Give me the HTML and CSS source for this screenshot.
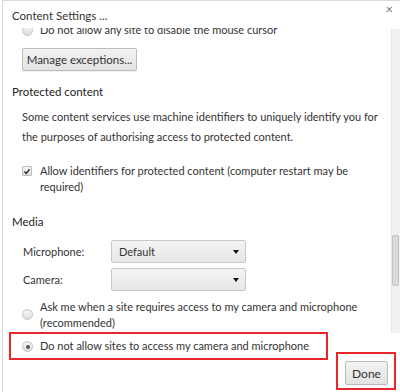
FILE: index.html
```html
<!DOCTYPE html>
<html>
<head>
<meta charset="utf-8">
<link rel="stylesheet" href="styles.css">
</head>
<body>
<div class="dialog">
  <div class="header">
    <span class="title">Content Settings ...</span>
    <span class="close">&#215;</span>
  </div>
  <div class="main">
    <div class="scroll">
      <div class="content">
        <div class="opt first">
          <span class="radio"></span>
          <span class="label">Do not allow any site to disable the mouse cursor</span>
        </div>
        <button class="btn manage">Manage exceptions...</button>
        <h3 class="section">Protected content</h3>
        <p class="para">Some content services use machine identifiers to uniquely identify you for the purposes of authorising access to protected content.</p>
        <div class="opt check-row">
          <span class="checkbox"><svg width="9" height="9" viewBox="0 0 9 9"><path d="M1.6 4.6 L3.6 6.6 L7.4 2" fill="none" stroke="#333" stroke-width="1.6"/></svg></span>
          <span class="label">Allow identifiers for protected content (computer restart may be required)</span>
        </div>
        <h3 class="section media">Media</h3>
        <div class="field mic">
          <span class="flabel">Microphone:</span>
          <span class="select">Default<i class="arrow"></i></span>
        </div>
        <div class="field cam">
          <span class="flabel">Camera:</span>
          <span class="select"><i class="arrow"></i></span>
        </div>
        <div class="opt ask">
          <span class="radio"></span>
          <span class="label">Ask me when a site requires access to my camera and microphone (recommended)</span>
        </div>
        <div class="highlight">
          <div class="opt">
            <span class="radio checked"></span>
            <span class="label">Do not allow sites to access my camera and microphone</span>
          </div>
        </div>
      </div>
    </div>
    <div class="scrollbar"><div class="thumb"></div></div>
  </div>
  <div class="footer">
    <div class="done-box"><button class="btn done">Done</button></div>
  </div>
</div>
</body>
</html>
```
FILE: styles.css
```css
* { box-sizing: border-box; }
html, body { margin: 0; padding: 0; background: #fff; }
body {
  width: 400px; height: 392px; overflow: hidden;
  font-family: "Lato", "Open Sans", sans-serif;
  font-size: 11px;
  color: #333;
}
.dialog {
  margin-left: 2px;
  border-top: 1px solid #d9d9d9;
  border-left: 1px solid #d9d9d9;
  height: 392px;
}
.header {
  height: 27px;
  display: flex;
  align-items: flex-start;
  justify-content: space-between;
  padding: 0 7px 0 9px;
}
.title { font-size: 11.5px; color: #333; line-height: 16px; margin-top: 7px; }
.close { color: #777; font-size: 13px; line-height: 14px; margin-top: 1px; }
.main { display: flex; height: 332px; }
.scroll { flex: 1; overflow: hidden; }
.content { margin-top: -6px; padding-left: 19px; }
.scrollbar {
  flex: none;
  width: 9px; margin-top: 1px; height: 304px;
  background: #f1f1f1;
  border-left: 1px solid #e6e6e6;
  padding-top: 206px;
}
.thumb {
  width: 7px; height: 51px;
  background: #d9d9d9; border: 1px solid #c2c2c2; border-radius: 2px;
}
.opt { display: flex; align-items: flex-start; line-height: 16px; }
.opt .label { margin-left: 7px; }
.radio {
  flex: none;
  width: 11px; height: 11px; border-radius: 50%;
  border: 1px solid #c4c4c4;
  background: linear-gradient(#f6f6f6, #dedede);
  margin-top: 3px;
  position: relative;
}
.radio.checked::after {
  content: ""; position: absolute; left: 2.5px; top: 2.5px;
  width: 4px; height: 4px; border-radius: 50%; background: #555;
}
.checkbox {
  flex: none;
  width: 10px; height: 10px; border: 1px solid #bdbdbd; border-radius: 1px;
  background: linear-gradient(#f6f6f6, #dedede);
  margin: 3px 1px 0 0;
  display: flex; align-items: center; justify-content: center;
}
.checkbox svg { display: block; }
.btn {
  font-family: inherit; font-size: 11.5px; color: #333;
  background: linear-gradient(#f3f3f3, #e2e2e2);
  border: 1px solid #bcbcbc; border-radius: 2px;
  box-shadow: 0 1px 0 rgba(0,0,0,0.06);
  padding: 0 8px;
  display: block;
  white-space: nowrap;
}
.manage { height: 23px; margin-top: 10px; width: 115px; padding: 0; }
.section { font-size: 11.5px; font-weight: normal; margin: 12px 0 0 -10px; line-height: 18px; color: #222; }
.para { margin: 6px 0 0 0; line-height: 20px; }
.check-row { margin-top: 16px; }
.check-row .label { width: 340px; }
.media { margin-top: 18px; }
.field { display: flex; align-items: center; height: 23px; }
.mic { margin-top: 9px; }
.cam { margin-top: 5px; }
.flabel { width: 89px; padding-left: 1px; }
.select {
  width: 135px; height: 23px;
  border: 1px solid #c8c8c8; border-radius: 2px;
  background: linear-gradient(#f4f4f4, #e7e7e7);
  display: flex; align-items: center; padding-left: 7px;
  position: relative;
}
.arrow {
  position: absolute; right: 6px; top: 9px;
  width: 0; height: 0;
  border-left: 3px solid transparent; border-right: 3px solid transparent;
  border-top: 4px solid #111;
}
.ask { margin-top: 8px; }
.ask .radio { margin-top: 10px; }
.highlight {
  margin: 1px 0 0 -13px;
  width: 319px; height: 28px;
  border: 2px solid #e8262b;
  padding: 4px 0 0 11px;
  white-space: nowrap;
}
.footer { display: flex; justify-content: flex-end; padding-right: 4px; margin-top: -8px; }
.done-box {
  width: 60px; height: 38px;
  border: 2px solid #e8262b;
  padding: 7px 0 0 7px;
}
.done { height: 24px; width: 43px; padding: 0; font-size: 12px; }
```
